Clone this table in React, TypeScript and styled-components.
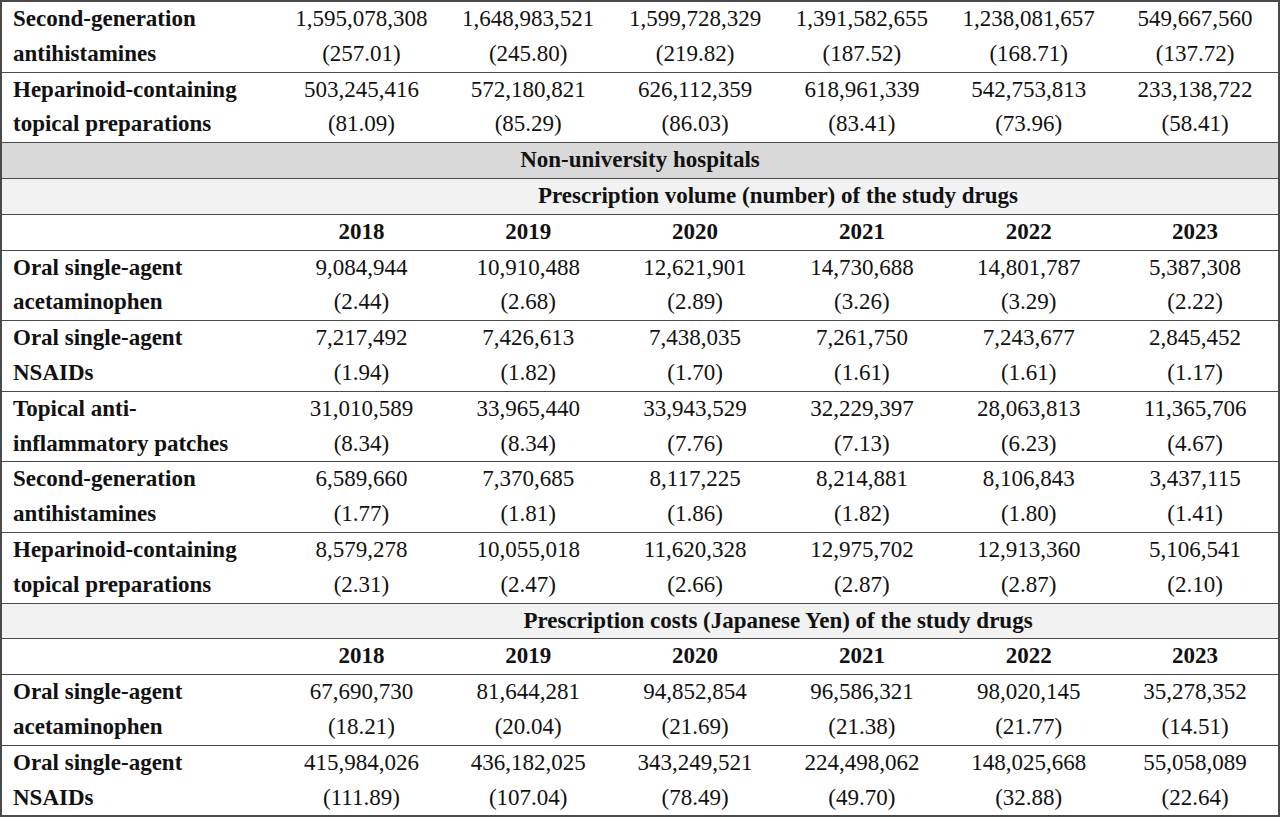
import React from 'react';
import styled, { createGlobalStyle } from 'styled-components';

const GlobalStyle = createGlobalStyle`
  html, body {
    margin: 0;
    padding: 0;
    background: #ffffff;
  }
  body {
    font-family: "Liberation Serif", "Times New Roman", serif;
    color: #111111;
  }
`;

const Table = styled.table`
  width: 1280px;
  border-collapse: collapse;
  table-layout: fixed;
  border: 2px solid #4a4a4a;
  font-size: 23px;
  line-height: 34.8px;
`;

const Row = styled.tr<{ $shade?: 'dark' | 'light' }>`
  border-top: 1px solid #4a4a4a;
  background: ${(p) => (p.$shade === 'dark' ? '#d9d9d9' : p.$shade === 'light' ? '#f2f2f2' : '#ffffff')};
`;

const Label = styled.td`
  padding: 0 0 0 11px;
  font-weight: 700;
  text-align: left;
  vertical-align: top;
  white-space: nowrap;
`;

const Cell = styled.td`
  padding: 0;
  text-align: center;
  vertical-align: top;
  white-space: nowrap;
`;

const Heading = styled.td`
  padding: 0;
  font-weight: 700;
  text-align: center;
`;

const Year = styled.td`
  padding: 0;
  font-weight: 700;
  text-align: center;
`;

const Line = styled.div``;

type DataRow = { label: [string, string]; values: [string, string][] };

const costsUni: DataRow[] = [
  {
    label: ['Second-generation', 'antihistamines'],
    values: [
      ['1,595,078,308', '(257.01)'],
      ['1,648,983,521', '(245.80)'],
      ['1,599,728,329', '(219.82)'],
      ['1,391,582,655', '(187.52)'],
      ['1,238,081,657', '(168.71)'],
      ['549,667,560', '(137.72)'],
    ],
  },
  {
    label: ['Heparinoid-containing', 'topical preparations'],
    values: [
      ['503,245,416', '(81.09)'],
      ['572,180,821', '(85.29)'],
      ['626,112,359', '(86.03)'],
      ['618,961,339', '(83.41)'],
      ['542,753,813', '(73.96)'],
      ['233,138,722', '(58.41)'],
    ],
  },
];

const volumeNonUni: DataRow[] = [
  {
    label: ['Oral single-agent', 'acetaminophen'],
    values: [
      ['9,084,944', '(2.44)'],
      ['10,910,488', '(2.68)'],
      ['12,621,901', '(2.89)'],
      ['14,730,688', '(3.26)'],
      ['14,801,787', '(3.29)'],
      ['5,387,308', '(2.22)'],
    ],
  },
  {
    label: ['Oral single-agent', 'NSAIDs'],
    values: [
      ['7,217,492', '(1.94)'],
      ['7,426,613', '(1.82)'],
      ['7,438,035', '(1.70)'],
      ['7,261,750', '(1.61)'],
      ['7,243,677', '(1.61)'],
      ['2,845,452', '(1.17)'],
    ],
  },
  {
    label: ['Topical anti-', 'inflammatory patches'],
    values: [
      ['31,010,589', '(8.34)'],
      ['33,965,440', '(8.34)'],
      ['33,943,529', '(7.76)'],
      ['32,229,397', '(7.13)'],
      ['28,063,813', '(6.23)'],
      ['11,365,706', '(4.67)'],
    ],
  },
  {
    label: ['Second-generation', 'antihistamines'],
    values: [
      ['6,589,660', '(1.77)'],
      ['7,370,685', '(1.81)'],
      ['8,117,225', '(1.86)'],
      ['8,214,881', '(1.82)'],
      ['8,106,843', '(1.80)'],
      ['3,437,115', '(1.41)'],
    ],
  },
  {
    label: ['Heparinoid-containing', 'topical preparations'],
    values: [
      ['8,579,278', '(2.31)'],
      ['10,055,018', '(2.47)'],
      ['11,620,328', '(2.66)'],
      ['12,975,702', '(2.87)'],
      ['12,913,360', '(2.87)'],
      ['5,106,541', '(2.10)'],
    ],
  },
];

const costsNonUni: DataRow[] = [
  {
    label: ['Oral single-agent', 'acetaminophen'],
    values: [
      ['67,690,730', '(18.21)'],
      ['81,644,281', '(20.04)'],
      ['94,852,854', '(21.69)'],
      ['96,586,321', '(21.38)'],
      ['98,020,145', '(21.77)'],
      ['35,278,352', '(14.51)'],
    ],
  },
  {
    label: ['Oral single-agent', 'NSAIDs'],
    values: [
      ['415,984,026', '(111.89)'],
      ['436,182,025', '(107.04)'],
      ['343,249,521', '(78.49)'],
      ['224,498,062', '(49.70)'],
      ['148,025,668', '(32.88)'],
      ['55,058,089', '(22.64)'],
    ],
  },
];

const years = ['2018', '2019', '2020', '2021', '2022', '2023'];

const DrugRows = ({ rows }: { rows: DataRow[] }) => (
  <>
    {rows.map((r, i) => (
      <Row key={i}>
        <Label>
          <Line>{r.label[0]}</Line>
          <Line>{r.label[1]}</Line>
        </Label>
        {r.values.map((v, j) => (
          <Cell key={j}>
            <Line>{v[0]}</Line>
            <Line>{v[1]}</Line>
          </Cell>
        ))}
      </Row>
    ))}
  </>
);

const YearRow = () => (
  <Row>
    <Cell />
    {years.map((y) => (
      <Year key={y}>{y}</Year>
    ))}
  </Row>
);

const SubHeading = ({ children }: { children: React.ReactNode }) => (
  <Row $shade="light">
    <Cell />
    <Heading colSpan={6}>{children}</Heading>
  </Row>
);

const App = () => {
  return (
    <>
      <GlobalStyle />
      <Table>
        <colgroup>
          <col style={{ width: 277 }} />
          {years.map((y) => (
            <col key={y} />
          ))}
        </colgroup>
        <tbody>
          <DrugRows rows={costsUni} />
          <Row $shade="dark">
            <Heading colSpan={7}>Non-university hospitals</Heading>
          </Row>
          <SubHeading>Prescription volume (number) of the study drugs</SubHeading>
          <YearRow />
          <DrugRows rows={volumeNonUni} />
          <SubHeading>Prescription costs (Japanese Yen) of the study drugs</SubHeading>
          <YearRow />
          <DrugRows rows={costsNonUni} />
        </tbody>
      </Table>
    </>
  );
};

export default App;
